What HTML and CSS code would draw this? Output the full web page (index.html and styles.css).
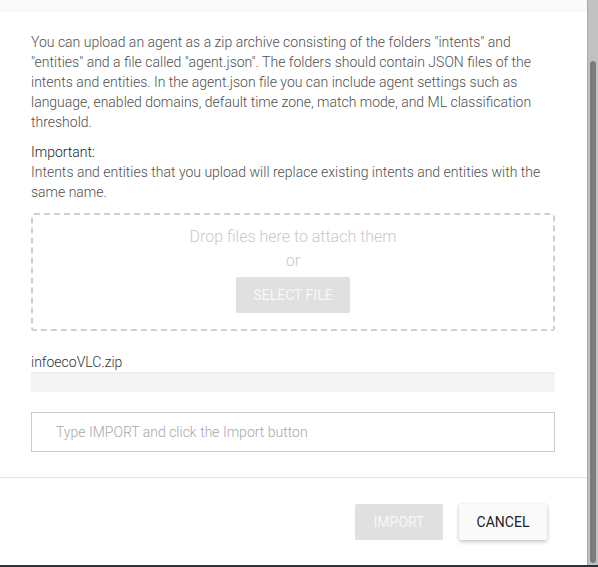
FILE: index.html
```html
<!DOCTYPE html>
<html lang="en">
<head>
<meta charset="utf-8">
<title>Import agent</title>
<link rel="stylesheet" href="styles.css">
</head>
<body>
<div class="page">
  <div class="window">
    <div class="dialog">
      <div class="dialog-top"></div>
      <div class="dialog-body">
        <p class="intro">You can upload an agent as a zip archive consisting of the folders "intents" and "entities" and a file called "agent.json". The folders should contain JSON files of the intents and entities. In the agent.json file you can include agent settings such as language, enabled domains, default time zone, match mode, and ML classification threshold.</p>
        <p class="important"><span class="important-label">Important:</span><br>Intents and entities that you upload will replace existing intents and entities with the same name.</p>
        <div class="dropzone">
          <div class="drop-line">Drop files here to attach them</div>
          <div class="drop-line">or</div>
          <button class="btn btn-disabled btn-select" type="button">Select file</button>
        </div>
        <div class="file-name">infoecoVLC.zip</div>
        <div class="progress"></div>
        <input class="confirm-input" type="text" placeholder="Type IMPORT and click the Import button">
      </div>
      <div class="dialog-footer">
        <button class="btn btn-disabled btn-action" type="button">Import</button>
        <button class="btn btn-cancel btn-action" type="button">Cancel</button>
      </div>
    </div>
    <div class="scrollbar"><div class="thumb"></div></div>
  </div>
  <div class="bottom-edge"></div>
</div>
</body>
</html>
```

FILE: styles.css
```css
* { box-sizing: border-box; }
html, body { margin: 0; padding: 0; background: #ffffff; }
body {
  font-family: Roboto, "Noto Sans", "Liberation Sans", sans-serif;
  font-weight: 300;
  font-size: 14px;
  line-height: 20px;
  color: #505050;
}
.page { width: 598px; height: 567px; display: flex; flex-direction: column; }
.window { display: flex; flex: 0 0 565px; }
.dialog { width: 587px; display: flex; flex-direction: column; background: #fff; }
.dialog-top { height: 12px; background: #f9f9f9; }
.dialog-body { padding: 20px 32px 25px 31px; border-bottom: 1px solid #e3e3e3; }
.intro { margin: 0; }
.important { margin: 10px 0 0; }
.important-label { font-weight: 300; color: #1e1e1e; }
.dropzone {
  margin-top: 11px;
  height: 118px;
  border: 2px dashed #cfcfcf;
  border-radius: 3px;
  padding-top: 10px;
  display: flex;
  flex-direction: column;
  align-items: center;
  color: #c9c9c9;
  font-size: 16px;
  line-height: 24px;
}
.btn {
  font-family: Roboto, "Noto Sans", "Liberation Sans", sans-serif;
  font-size: 14px;
  font-weight: 400;
  text-transform: uppercase;
  border: 0;
  border-radius: 2px;
  height: 36px;
  padding: 0 12px;
  cursor: pointer;
}
.btn-disabled { background: #e0e0e0; color: #f7f7f7; }
.btn-select { margin-top: 4px; width: 114px; }
.file-name { margin-top: 21px; color: #333; }
.progress { height: 20px; background: #f4f4f4; border-top: 1px solid #ececec; }
.confirm-input {
  display: block;
  width: 100%;
  margin-top: 20px;
  height: 40px;
  border: 1px solid #cccccc;
  padding: 0 24px;
  font-family: Roboto, "Noto Sans", "Liberation Sans", sans-serif;
  font-size: 14px;
  font-weight: 300;
  color: #444;
  outline: none;
}
.confirm-input::placeholder { color: #a8a8a8; }
.dialog-footer { display: flex; justify-content: flex-end; gap: 16px; padding: 26px 40px 25px 0; }
.btn-action { width: 88px; }
.btn-cancel { background: #fafafa; color: #222; box-shadow: 0 2px 4px rgba(0,0,0,0.22), 0 0 2px rgba(0,0,0,0.08); }
.scrollbar { width: 11px; background: #c2c2c2; border-left: 1px solid #a9a9a9; padding: 61px 2px 2px 2px; display: flex; }
.thumb { flex: 1; background: #7c7c7c; border-radius: 3px; }
.bottom-edge { height: 2px; background: #2f323a; }
```
